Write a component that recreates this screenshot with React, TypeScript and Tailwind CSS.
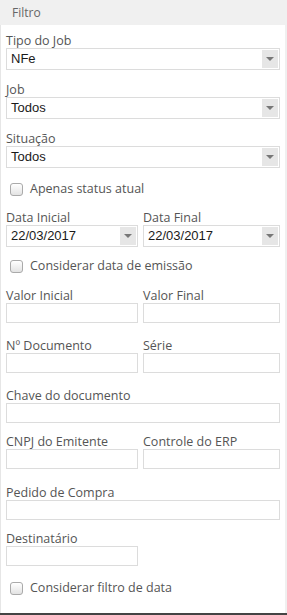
const LABEL = "block h-[15px] leading-[15px] text-[12.5px] text-[#555] font-['Open_Sans',sans-serif] whitespace-nowrap"

function Label({ children }: { children: string }) {
  return <span className={LABEL}>{children}</span>
}

function Arrow() {
  return (
    <svg width="8" height="4" viewBox="0 0 8 4">
      <path d="M0 0 L8 0 L4 4 Z" fill="#777" />
    </svg>
  )
}

function Select({ value, wide }: { value: string; wide?: boolean }) {
  return (
    <div
      className={`${wide ? 'w-[274px]' : 'w-full'} h-[22px] border border-[#dcdcdc] bg-white flex items-stretch p-[1px]`}
    >
      <span className="flex-1 pl-[3px] leading-[18px] text-[13px] text-[#1a1a1a] font-['Liberation_Sans',Arial,sans-serif]">
        {value}
      </span>
      <span className="w-[16px] bg-[#e6e6e6] flex items-center justify-center">
        <Arrow />
      </span>
    </div>
  )
}

function Input({ wide }: { wide?: boolean }) {
  return <div className={`${wide ? 'w-[274px]' : 'w-full'} h-[20px] border border-[#dcdcdc] bg-white`} />
}

function Check({ label }: { label: string }) {
  return (
    <div className="h-[16px] flex items-center pl-[4px] gap-[7px]">
      <span className="w-[13px] h-[13px] rounded-[3px] border border-[#aaa] bg-gradient-to-b from-white to-[#e3e3e3]" />
      <span className="text-[12.5px] leading-[16px] text-[#555] font-['Open_Sans',sans-serif] whitespace-nowrap">
        {label}
      </span>
    </div>
  )
}

function Pair({ left, right, children }: { left: string; right: string; children: [React.ReactNode, React.ReactNode] }) {
  return (
    <div className="grid grid-cols-[132px_137px] gap-x-[5px]">
      <div>
        <Label>{left}</Label>
        {children[0]}
      </div>
      <div>
        <Label>{right}</Label>
        {children[1]}
      </div>
    </div>
  )
}

export default function App() {
  return (
    <div className="w-[287px] h-[615px] bg-[#f0f0f0] flex flex-col">
      <div className="h-[25px] shrink-0 pl-[12px] flex items-center text-[12px] text-[#666] font-['Open_Sans',sans-serif]">
        Filtro
      </div>

      <div className="flex-1 w-[285px] bg-white border-l border-[#e6e6e6] pl-[5px] pr-[5px] flex flex-col">
        {/* Tipo / Job / Situação */}
        <div className="mt-[8px]">
          <Label>Tipo do Job</Label>
          <Select value="NFe" wide />
        </div>
        <div className="mt-[12px]">
          <Label>Job</Label>
          <Select value="Todos" wide />
        </div>
        <div className="mt-[12px]">
          <Label>Situação</Label>
          <Select value="Todos" wide />
        </div>

        <div className="mt-[13px]">
          <Check label="Apenas status atual" />
        </div>

        <div className="mt-[13px]">
          <Pair left="Data Inicial" right="Data Final">
            <Select value="22/03/2017" />
            <Select value="22/03/2017" />
          </Pair>
        </div>

        <div className="mt-[11px]">
          <Check label="Considerar data de emissão" />
        </div>

        <div className="mt-[14px]">
          <Pair left="Valor Inicial" right="Valor Final">
            <Input />
            <Input />
          </Pair>
        </div>

        <div className="mt-[15px]">
          <Pair left="Nº Documento" right="Série">
            <Input />
            <Input />
          </Pair>
        </div>

        <div className="mt-[15px]">
          <Label>Chave do documento</Label>
          <Input wide />
        </div>

        <div className="mt-[11px]">
          <Pair left="CNPJ do Emitente" right="Controle do ERP">
            <Input />
            <Input />
          </Pair>
        </div>

        <div className="mt-[16px]">
          <Label>Pedido de Compra</Label>
          <Input wide />
        </div>

        <div className="mt-[11px] w-[132px]">
          <Label>Destinatário</Label>
          <Input />
        </div>

        <div className="mt-[14px]">
          <Check label="Considerar filtro de data" />
        </div>
      </div>

      <div className="h-[2px] shrink-0 bg-[#444]" />
    </div>
  )
}
